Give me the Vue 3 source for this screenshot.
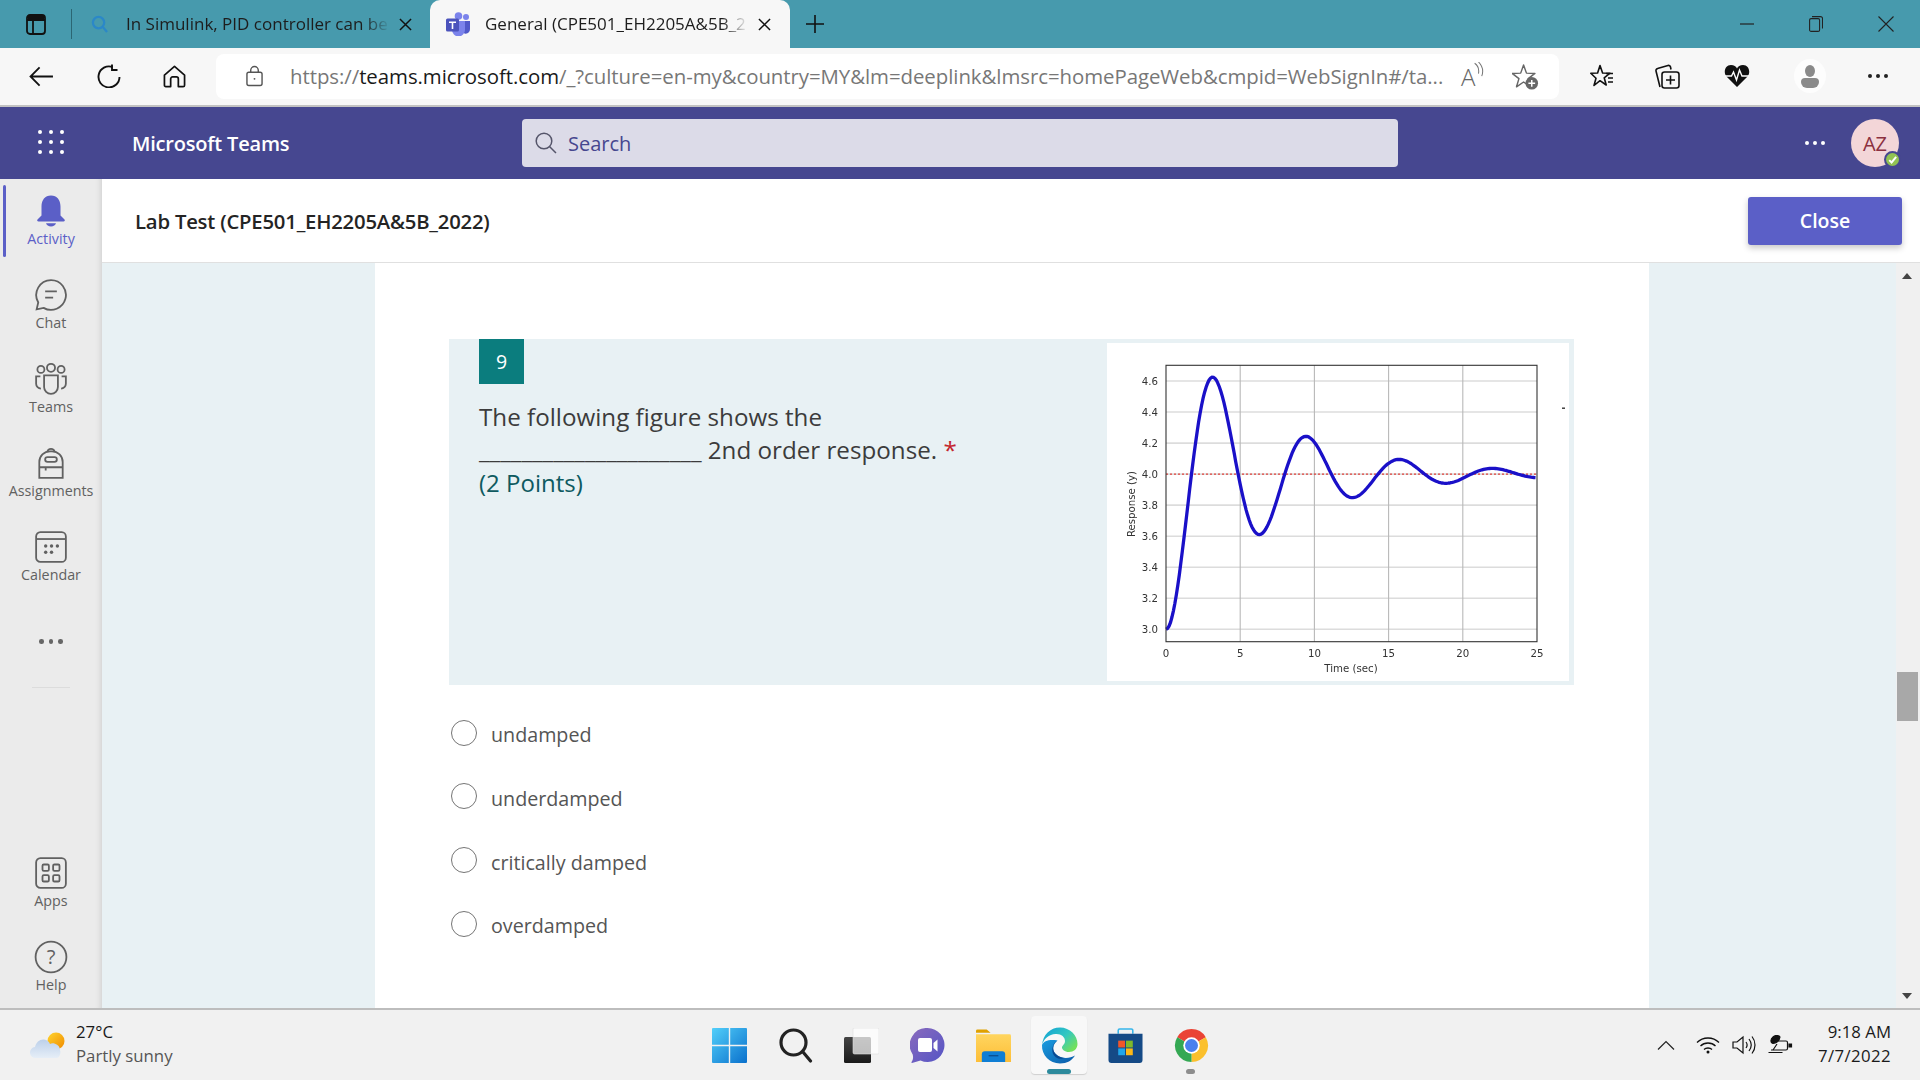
<script setup>
import { computed } from 'vue'

const X0 = 1166, XS = (1537 - 1166) / 25
const Y3 = 629.3, YS = (629.3 - 381) / 1.6
const px = (t) => X0 + t * XS
const py = (v) => Y3 - (v - 3) * YS

const curve = computed(() => {
  const pts = []
  for (let t = 0; t <= 25; t += 0.1) {
    const v = 4 - Math.exp(-0.15 * t) * (Math.cos(t) + 0.15 * Math.sin(t))
    pts.push(`${px(t).toFixed(1)},${py(v).toFixed(1)}`)
  }
  return pts.join(' ')
})
const yTicks = ['3.0', '3.2', '3.4', '3.6', '3.8', '4.0', '4.2', '4.4', '4.6']
const xTicks = [0, 5, 10, 15, 20, 25]
const options = ['undamped', 'underdamped', 'critically damped', 'overdamped']
</script>

<template>
  <div class="page">
    <!-- browser tab strip -->
    <div class="tabstrip">
      <svg class="tab-actions" viewBox="0 0 20 21" fill="none" stroke="#111" stroke-width="1.8">
        <rect x="1" y="1" width="18" height="19" rx="3" />
        <path d="M1 6h18M7 6v14" />
        <path d="M2 2h16v4H2z" fill="#111" stroke="none" />
      </svg>
      <span class="tab-sep"></span>
      <div class="tab">
        <svg class="tab-q" viewBox="0 0 18 20" fill="none" stroke="#2b88c8" stroke-width="2.4">
          <circle cx="8" cy="8" r="6" />
          <path d="M12.5 12.5 17 18" />
        </svg>
        <span class="tab-title faded">In Simulink, PID controller can be</span>
        <svg class="tab-x" viewBox="0 0 14 14" stroke="#111" stroke-width="1.6"><path d="M1 1l12 12M13 1 1 13" /></svg>
      </div>
      <div class="tab active">
        <svg class="tab-teams" viewBox="0 0 25 24">
          <circle cx="20" cy="5" r="3" fill="#7b83eb" />
          <path d="M14 9h10v8a4.500 4.500 0 0 1-9 .5Z" fill="#5059c9" />
          <circle cx="12.500" cy="4" r="3.800" fill="#7b83eb" />
          <path d="M6 9h13v9a6.500 6.500 0 0 1-13 0Z" fill="#7b83eb" />
          <rect x="0" y="6.500" width="13" height="13" rx="1.500" fill="#4b53bc" />
          <path d="M3 9.500h7v1.500H7.300v6H5.700v-6H3z" fill="#fff" />
        </svg>
        <span class="tab-title faded">General (CPE501_EH2205A&amp;5B_2</span>
        <svg class="tab-x" viewBox="0 0 14 14" stroke="#111" stroke-width="1.6"><path d="M1 1l12 12M13 1 1 13" /></svg>
      </div>
      <svg class="tab-plus" viewBox="0 0 20 20" stroke="#111" stroke-width="1.6"><path d="M10 1v18M1 10h18" /></svg>
      <div class="winctl">
        <svg class="win-min" viewBox="0 0 14 2" stroke="#222" stroke-width="1.2"><path d="M0 1h14" /></svg>
        <svg class="win-res" viewBox="0 0 14 16" fill="none" stroke="#222" stroke-width="1.1">
          <rect x=".6" y="2.600" width="10" height="12.800" rx="1.500" />
          <path d="M3 .6h8.500a2 2 0 0 1 2 2v10" />
        </svg>
        <svg class="win-x" viewBox="0 0 16 16" stroke="#222" stroke-width="1.100"><path d="M.5.5l15 15M15.500.5l-15 15" /></svg>
      </div>
    </div>

    <!-- address bar -->
    <div class="addrbar">
      <svg class="nav-back" viewBox="0 0 26 22" fill="none" stroke="#111" stroke-width="1.900"><path d="M25 11H2M11 1.500 1.500 11l9.500 9.500" /></svg>
      <svg class="nav-reload" viewBox="0 0 24 24" fill="none" stroke="#111" stroke-width="1.900"><path d="M15.500 3A10.500 10.500 0 1 0 22.500 13" /><path d="M15 .5v5.500h5.500" /></svg>
      <svg class="nav-home" viewBox="0 0 24 24" fill="none" stroke="#111" stroke-width="1.800" stroke-linejoin="round"><path d="M1.500 10.500 12 1.500l10.500 9v10.500a1.500 1.500 0 0 1-1.500 1.500h-5v-8a2 2 0 0 0-2-2h-4a2 2 0 0 0-2 2v8H3a1.500 1.500 0 0 1-1.500-1.500z" /></svg>
      <div class="omnibox">
        <svg class="lock" viewBox="0 0 18 22" fill="none" stroke="#555" stroke-width="1.500"><rect x="1" y="7" width="16" height="14" rx="2" /><path d="M5 7V5a4 4 0 0 1 8 0v2" /><circle cx="9" cy="14" r="1" fill="#555" stroke="none" /></svg>
        <span class="url"><span class="url-dim">https://</span><span class="url-host">teams.microsoft.com</span><span class="url-dim">/_?culture=en-my&amp;country=MY&amp;lm=deeplink&amp;lmsrc=homePageWeb&amp;cmpid=WebSignIn#/ta...</span></span>
        <span class="read-aloud">
          <span class="read-a">A</span>
          <svg class="read-waves" viewBox="0 0 8 14" fill="none" stroke="#777" stroke-width=".8"><path d="M1 1c3 2 3.500 5 3 8M4 0c3 3 4 7 2.500 11" /></svg>
        </span>
        <svg class="fav-add" viewBox="0 0 28 28" fill="none">
          <path d="M12 2l3 8.500 8.800.3-7 5.400 2.500 8.500-7.300-5-7.300 5 2.500-8.500-7-5.400 8.800-.3z" stroke="#666" stroke-width="1.500" stroke-linejoin="round" />
          <circle cx="20.500" cy="21" r="6.500" fill="#666" />
          <path d="M20.500 17.500v7M17 21h7" stroke="#fff" stroke-width="1.500" />
        </svg>
      </div>
      <svg class="br-fav" viewBox="0 0 24 24" fill="none" stroke="#111" stroke-width="1.600" stroke-linejoin="round">
        <path d="M10 1.500l2.600 7.500 7.400.2-5.800 4.600 2 7.200-6.200-4.300L4 21.500l2-7.200L.8 9.200 7.600 9z" />
        <path d="M16 9.500h7M18 14h5M18 18h5" />
      </svg>
      <svg class="br-coll" viewBox="0 0 26 26" fill="none" stroke="#111" stroke-width="1.600">
        <path d="M6 24 2 8a2 2 0 0 1 1.500-2.400L14 2.500a2 2 0 0 1 2.500 1.500l.5 2.500" />
        <rect x="8" y="9" width="17" height="16" rx="2.500" />
        <path d="M16.500 12.500v9M12 17h9" />
      </svg>
      <svg class="br-heart" viewBox="0 0 26 24">
        <path d="M13 23 2.500 12.500C-1 8.500 1 1 7 1c3 0 5 1.500 6 3.500C14 2.500 16 1 19 1c6 0 8 7.500 4.500 11.500Z" fill="#111" />
        <path d="M1 12h6.500l2-4 3 8 3-10 2.500 6h7" fill="none" stroke="#fff" stroke-width="1.400" />
      </svg>
      <div class="br-profile">
        <span class="pf-head"></span>
        <span class="pf-body"></span>
      </div>
      <div class="br-dots"><i></i><i></i><i></i></div>
    </div>

    <!-- teams header -->
    <div class="teams-bar">
      <div class="waffle"><i v-for="n in 9" :key="n"></i></div>
      <span class="brand">Microsoft Teams</span>
      <div class="search">
        <svg class="search-ic" viewBox="0 0 22 22" fill="none" stroke="#55556a" stroke-width="1.500"><circle cx="9" cy="9" r="7.800" /><path d="M14.500 14.500 21 21" /></svg>
        <span class="search-text">Search</span>
      </div>
      <div class="bar-dots"><i></i><i></i><i></i></div>
      <div class="avatar">
        AZ
        <span class="status">
          <svg viewBox="0 0 10 10" fill="none" stroke="#fff" stroke-width="1.500"><path d="M2.500 5.500 4.300 7.300 7.800 3" /></svg>
        </span>
      </div>
    </div>

    <div class="main">
      <!-- teams rail -->
      <aside class="rail">
        <div class="rail-item current">
          <svg class="bell" viewBox="0 0 32 32" fill="#5b5fc7">
            <path d="M16 .5C10 .5 6.500 5 6.500 11.500v9L2.500 24.500c-.8 1 0 2 1 2h25c1 0 1.800-1 1-2l-4-4v-9C25.500 5 22 .5 16 .5Z" />
            <path d="M11 28.300h10c-.5 2-2.500 3.200-5 3.200s-4.500-1.200-5-3.200Z" />
          </svg>
          <span>Activity</span>
        </div>
        <div class="rail-item">
          <svg viewBox="0 0 32 32" class="line">
            <path d="M16 2a14 14 0 1 1-7 26.100L2.500 29.500 4 23A14 14 0 0 1 16 2Z" />
            <path d="M10.500 12.500h11M10.500 18.500h7.500" />
          </svg>
          <span>Chat</span>
        </div>
        <div class="rail-item">
          <svg viewBox="0 0 32 32" class="line">
            <circle cx="6.500" cy="7" r="3.300" /><circle cx="16" cy="5.500" r="3.800" /><circle cx="25.500" cy="7" r="3.300" />
            <path d="M9.500 12.500h13v11a6.500 6.500 0 0 1-13 0Z" />
            <path d="M6 13.500H2v7a4.500 4.500 0 0 0 4.500 4.500M26 13.500h4v7a4.500 4.500 0 0 1-4.500 4.500" />
          </svg>
          <span>Teams</span>
        </div>
        <div class="rail-item">
          <svg viewBox="0 0 32 32" class="line">
            <path d="M12.500 5.500a3.600 3.600 0 0 1 7 0" />
            <path d="M5 30V15A10 10 0 0 1 15 5h2a10 10 0 0 1 10 10v15z" />
            <rect x="10.500" y="10.500" width="11" height="4.500" rx="2.200" />
            <path d="M5 20h22M11 20v3" />
          </svg>
          <span>Assignments</span>
        </div>
        <div class="rail-item">
          <svg viewBox="0 0 32 32" class="line">
            <rect x="2" y="2" width="28" height="28" rx="4" />
            <path d="M2 8.500h28" />
            <g fill="#616161" stroke="none">
              <circle cx="11" cy="15" r="1.600" /><circle cx="16.500" cy="15" r="1.600" /><circle cx="22" cy="15" r="1.600" />
              <circle cx="11" cy="21" r="1.600" /><circle cx="16.500" cy="21" r="1.600" />
            </g>
          </svg>
          <span>Calendar</span>
        </div>
        <div class="rail-more"><i></i><i></i><i></i></div>
        <div class="rail-sep"></div>
        <div class="rail-bottom">
          <div class="rail-item">
            <svg viewBox="0 0 32 32" class="line">
              <rect x="2" y="2" width="28" height="28" rx="4" />
              <rect x="8" y="8" width="6" height="6" rx="1.200" /><rect x="18" y="8" width="6" height="6" rx="1.200" />
              <rect x="8" y="18" width="6" height="6" rx="1.200" /><rect x="18" y="18" width="6" height="6" rx="1.200" />
            </svg>
            <span>Apps</span>
          </div>
          <div class="rail-item">
            <svg viewBox="0 0 32 32" class="line">
              <circle cx="16" cy="16" r="14.500" />
              <text x="16" y="22.500" class="help-q" text-anchor="middle">?</text>
            </svg>
            <span>Help</span>
          </div>
        </div>
      </aside>

      <div class="workspace">
        <div class="subheader">
          <span class="sub-title">Lab Test (CPE501_EH2205A&amp;5B_2022)</span>
          <button class="close-btn">Close</button>
        </div>
        <div class="content">
          <div class="scroller">
            <div class="sheet">
              <section class="question">
                <div class="q-left">
                  <div class="q-num">9</div>
                  <p class="q-text">The following figure shows the _____________________ 2nd order response. <span class="req">*</span></p>
                  <p class="q-points">(2 Points)</p>
                </div>
                <div class="q-figure">
                  <svg viewBox="1107 343 462 338" class="chart">
                    <line v-for="t in yTicks" :key="'g' + t" x1="1166" x2="1537" :y1="py(+t)" :y2="py(+t)" stroke="#dcdcdc" stroke-width="1.600" />
                    <line v-for="t in [5, 10, 15, 20]" :key="'v' + t" :x1="px(t)" :x2="px(t)" y1="365.300" y2="641.700" stroke="#b8b8b8" stroke-width="1.100" />
                    <line x1="1166" x2="1537" :y1="py(4)" :y2="py(4)" stroke="#e0403a" stroke-width="1.400" stroke-dasharray="2 2" />
                    <polyline :points="curve" fill="none" stroke="#1a10c8" stroke-width="3.300" />
                    <rect x="1166" y="365.300" width="371" height="276.400" fill="none" stroke="#333" stroke-width="1.100" />
                    <g class="ticks">
                      <text v-for="t in yTicks" :key="'y' + t" x="1158" :y="py(+t) + 3.800" text-anchor="end">{{ t }}</text>
                      <text v-for="t in xTicks" :key="'x' + t" :x="px(t)" y="657" text-anchor="middle">{{ t }}</text>
                      <text x="1351" y="672" text-anchor="middle">Time (sec)</text>
                      <text transform="translate(1135 504) rotate(-90)" text-anchor="middle">Response (y)</text>
                    </g>
                    <rect x="1562" y="407.500" width="3" height="1.400" fill="#333" />
                  </svg>
                </div>
              </section>
              <ul class="options">
                <li v-for="o in options" :key="o">
                  <span class="radio"></span>
                  <span class="opt-text">{{ o }}</span>
                </li>
              </ul>
            </div>
          </div>
          <div class="scrollbar">
            <span class="arrow up"></span>
            <span class="thumb"></span>
            <span class="arrow down"></span>
          </div>
        </div>
      </div>
    </div>

    <!-- windows taskbar -->
    <footer class="taskbar">
      <div class="weather">
        <svg class="weather-ic" viewBox="0 0 35 27">
          <defs>
            <linearGradient id="sunG" x1="0" y1="0" x2="1" y2="1"><stop offset="0" stop-color="#ffd52e" /><stop offset="1" stop-color="#f08a00" /></linearGradient>
            <linearGradient id="cloudG" x1="0" y1="0" x2="0" y2="1"><stop offset="0" stop-color="#bcd0ea" /><stop offset="1" stop-color="#e6eef7" /></linearGradient>
          </defs>
          <circle cx="26" cy="9" r="8.500" fill="url(#sunG)" />
          <path d="M6 26a5.500 5.500 0 0 1-1-11c1-5 5-8 9-7.500 3 .3 5 2 6 4.500 1-.7 3-1 5-.3 3 1 5 3 5 6.500 1 2 0 7.800-4 7.800z" fill="url(#cloudG)" />
        </svg>
        <div class="weather-text">
          <span class="w-temp">27°C</span>
          <span class="w-desc">Partly sunny</span>
        </div>
      </div>
      <div class="apps">
        <div class="app">
          <svg viewBox="0 0 35 35">
            <defs>
              <linearGradient id="winG" x1="0" y1="0" x2="1" y2="1"><stop offset="0" stop-color="#52cffa" /><stop offset="1" stop-color="#0a70cc" /></linearGradient>
            </defs>
            <path d="M1 0h15.800v16.800H0V1a1 1 0 0 1 1-1ZM18.200 0H34a1 1 0 0 1 1 1v15.800H18.200ZM0 18.200h16.800V35H1a1 1 0 0 1-1-1ZM18.200 18.200H35V34a1 1 0 0 1-1 1H18.200Z" fill="url(#winG)" />
          </svg>
        </div>
        <div class="app">
          <svg viewBox="0 0 33 35" fill="none" stroke="#222" stroke-width="3.200" stroke-linecap="round"><circle cx="14.500" cy="14.500" r="12.500" /><path d="M24 24l7.500 9" /></svg>
        </div>
        <div class="app">
          <svg viewBox="0 0 35 35">
            <defs>
              <linearGradient id="tvG" x1="0" y1="0" x2="0" y2="1"><stop offset="0" stop-color="#444" /><stop offset="1" stop-color="#1a1a1a" /></linearGradient>
            </defs>
            <rect x="0" y="9" width="27" height="26" rx="1.500" fill="url(#tvG)" />
            <rect x="9" y="0" width="26" height="26" rx="1.500" fill="#fff" fill-opacity=".7" stroke="#ddd" stroke-width=".6" />
          </svg>
        </div>
        <div class="app">
          <svg viewBox="0 0 34 35">
            <defs>
              <linearGradient id="meetG" x1="0" y1="0" x2="1" y2="1"><stop offset="0" stop-color="#8a6bbd" /><stop offset="1" stop-color="#5454c5" /></linearGradient>
            </defs>
            <path d="M17 0a17 17 0 1 1-7 32.500L1.500 35c-.8 0-.7-.8-.3-1.200 1.200-1.500 1.800-4 1-7.300A17 17 0 0 1 17 0Z" fill="url(#meetG)" />
            <rect x="7.500" y="10" width="14" height="14" rx="2" fill="#fff" />
            <path d="M23 15l4-3.500v12L23 20z" fill="#fff" />
          </svg>
        </div>
        <div class="app">
          <svg viewBox="0 0 36 34">
            <defs>
              <linearGradient id="fldG" x1="0" y1="0" x2="0" y2="1"><stop offset="0" stop-color="#ffd55f" /><stop offset="1" stop-color="#fdbe37" /></linearGradient>
            </defs>
            <path d="M0 2a1.500 1.500 0 0 1 1.500-1.500H11l4 3.500h-15z" fill="#e0a100" />
            <path d="M0 5.500h34.500a1.500 1.500 0 0 1 1.500 1.500V34H0z" fill="url(#fldG)" />
            <path d="M6 34V26a3 3 0 0 1 3-3h18a3 3 0 0 1 3 3v8z" fill="#0f7ed4" />
            <path d="M13 27.500h10" stroke="#0b4f91" stroke-width="1.400" />
          </svg>
        </div>
        <div class="app app-active">
          <svg viewBox="0 0 37 37">
            <defs>
              <linearGradient id="edgeA" x1="0" y1="0" x2="1" y2=".7"><stop offset="0" stop-color="#0f9fd8" /><stop offset=".6" stop-color="#34c8c0" /><stop offset="1" stop-color="#72e05c" /></linearGradient>
              <linearGradient id="edgeB" x1="0" y1="0" x2="1" y2="1"><stop offset="0" stop-color="#1a9de0" /><stop offset="1" stop-color="#0b5aa8" /></linearGradient>
            </defs>
            <path d="M1 18C2 8 9 .5 19 .5c10 0 17.500 8 17.500 16.500 0 5-4 8-8.500 8-4.500 0-7-2.500-7-4.500 0-2 3-3 3-6.500 0-4-4-7.500-9.500-7C8 7.500 3 11.500 1 18Z" fill="url(#edgeA)" />
            <path d="M1 18c-.5 10 7.500 18.500 18 18.500 7 0 12-3 15-8-5 3-12.500 3.500-17.500 0-6-4-5.500-11 0-15-8-1.500-14 .5-15.500 4.500Z" fill="url(#edgeB)" />
            <path d="M16.500 13.500c-5.500 4-6 11 0 15 2 1.400 4.500 2.200 7 2.500-2 1-6 1.500-9-1-5-4-4-13 2-16.500Z" fill="#0a4a92" />
          </svg>
          <span class="run-bar"></span>
        </div>
        <div class="app">
          <svg viewBox="0 0 35 36">
            <path d="M10 6V2.500A1.500 1.500 0 0 1 11.500 1h12A1.500 1.500 0 0 1 25 2.500V6" fill="none" stroke="#36b5ea" stroke-width="1.600" />
            <path d="M0 6h35v27a3 3 0 0 1-3 3H3a3 3 0 0 1-3-3Z" fill="#154a86" />
            <rect x="10" y="13" width="7" height="7" fill="#f0562a" /><rect x="18" y="13" width="7" height="7" fill="#7fb92a" />
            <rect x="10" y="21" width="7" height="7" fill="#20a6ea" /><rect x="18" y="21" width="7" height="7" fill="#fcb817" />
          </svg>
        </div>
        <div class="app">
          <svg viewBox="0 0 34 34">
            <path d="M17 17 3.140 9A16 16 0 0 1 30.860 9Z" fill="#ea4335" />
            <path d="M17 17 30.860 9A16 16 0 0 1 17 33Z" fill="#fbc02d" />
            <path d="M17 17 17 33A16 16 0 0 1 3.140 9Z" fill="#34a853" />
            <circle cx="17" cy="17" r="8" fill="#fff" />
            <circle cx="17" cy="17" r="6.300" fill="#4a80ee" />
          </svg>
          <span class="run-dot"></span>
        </div>
      </div>
      <div class="tray">
        <svg class="t-chev" viewBox="0 0 18 10" fill="none" stroke="#222" stroke-width="1.200"><path d="M1 9.500 9 1.500l8 8" /></svg>
        <svg class="t-wifi" viewBox="0 0 24 18" fill="none" stroke="#111" stroke-width="1.300">
          <path d="M1 6.500c6-6 16-6 22 0M4.500 10c4-4 11-4 15 0M8 13.500c2-2 6-2 8 0" />
          <circle cx="12" cy="16" r="1.500" fill="#111" stroke="none" />
        </svg>
        <svg class="t-vol" viewBox="0 0 24 20" fill="none" stroke="#111" stroke-width="1.200">
          <path d="M1 7v6h4l6 5V2L5 7z" />
          <path d="M14 7c1.500 2 1.500 4 0 6M17 4c3 4 3 8 0 12M20 1.500c4 5 4 12 0 17" />
        </svg>
        <svg class="t-bat" viewBox="0 0 25 20" fill="none" stroke="#111" stroke-width="1.200">
          <path d="M5 2c3-2.500 6-1.500 7 0-.5 3-3 6-7 6.500C2 8 2.500 4 5 2Z" fill="#111" />
          <path d="M8 6h10a1.500 1.500 0 0 1 1.500 1.500v6A1.500 1.500 0 0 1 18 15H3" />
          <path d="M.5 17.500h14M5 15l4-6" />
          <path d="M21 9h2.500v3H21z" fill="#111" />
        </svg>
        <div class="clock">
          <span>9:18 AM</span>
          <span class="date">7/7/2022</span>
        </div>
      </div>
    </footer>
  </div>
</template>

<style>
html, body { margin: 0; padding: 0; background: #fff; }
</style>

<style scoped>
.page {
  width: 1920px;
  height: 1080px;
  display: flex;
  flex-direction: column;
  overflow: hidden;
  font-family: "Open Sans", "Liberation Sans", sans-serif;
  color: #242424;
}
svg { display: block; flex: none; }

/* tab strip */
.tabstrip {
  height: 48px;
  flex: none;
  background: #479aad;
  display: flex;
  align-items: center;
  padding-left: 26px;
}
.tab-actions { width: 20px; height: 21px; }
.tab-sep { width: 1px; height: 30px; background: #2b6673; margin-left: 25px; }
.tab {
  height: 48px;
  display: flex;
  align-items: center;
  box-sizing: border-box;
}
.tab:not(.active) { width: 358px; }
.tab-q { width: 17px; height: 19px; margin-left: 19px; }
.tab-title {
  font-size: 17px;
  white-space: nowrap;
  overflow: hidden;
  color: #1d1d1d;
  margin-bottom: 2px;
}
.faded {
  -webkit-mask-image: linear-gradient(to right, #000 90%, transparent 100%);
  mask-image: linear-gradient(to right, #000 90%, transparent 100%);
}
.tab:not(.active) .tab-title { width: 264px; margin-left: 18px; flex: none; }
.tab:not(.active) .tab-x { margin-left: 9px; }
.tab-x { width: 13px; height: 13px; }
.tab.active {
  width: 360px;
  background: #f7f7f7;
  border-radius: 10px 10px 0 0;
  padding-left: 16px;
}
.tab-teams { width: 25px; height: 24px; }
.tab.active .tab-title { width: 263px; margin-left: 14px; flex: none; }
.tab.active .tab-x { margin-left: 10px; }
.tab-plus { width: 20px; height: 20px; margin-left: 15px; }
.winctl { margin-left: auto; display: flex; align-items: center; padding-right: 26px; }
.win-min { width: 14px; height: 2px; }
.win-res { width: 14px; height: 16px; margin-left: 55px; }
.win-x { width: 16px; height: 16px; margin-left: 55px; }

/* address bar */
.addrbar {
  height: 56px;
  flex: none;
  background: #f7f7f7;
  border-bottom: 2px solid #c2c2c2;
  display: flex;
  align-items: center;
  padding-left: 29px;
  padding-bottom: 1px;
  box-sizing: content-box;
}
.nav-back { width: 25px; height: 21px; }
.nav-reload { width: 24px; height: 24px; margin-left: 43px; }
.nav-home { width: 23px; height: 23px; margin-left: 42px; }
.omnibox {
  width: 1343px;
  height: 45px;
  margin-left: 30px;
  background: #fff;
  border-radius: 8px;
  display: flex;
  align-items: center;
  position: relative;
}
.lock { width: 17px; height: 22px; margin-left: 30px; }
.url { margin-left: 27px; font-size: 20.400px; white-space: nowrap; letter-spacing: -.05px; margin-bottom: 1px; }
.url-dim { color: #777; }
.url-host { color: #1a1a1a; }
.read-aloud { position: absolute; left: 1245px; top: 8px; display: flex; align-items: flex-start; }
.read-a { font-size: 24px; line-height: 30px; color: #666; font-weight: 300; }
.read-waves { width: 11px; height: 18px; margin-left: -2px; }
.fav-add { position: absolute; left: 1296px; top: 9px; width: 27px; height: 27px; }
.br-fav { width: 24px; height: 24px; margin-left: 31px; }
.br-coll { width: 26px; height: 26px; margin-left: 40px; }
.br-heart { width: 26px; height: 24px; margin-left: 44px; }
.br-profile {
  width: 32px;
  height: 34px;
  margin-left: 44px;
  border-radius: 50%;
  background: #fdfdfd;
  display: flex;
  flex-direction: column;
  align-items: center;
  justify-content: center;
}
.pf-head { width: 10px; height: 12px; border-radius: 50%; background: #8a8a8a; }
.pf-body { width: 18px; height: 10px; border-radius: 6px 6px 9px 9px; background: #8a8a8a; margin-top: 1px; }
.br-dots { display: flex; gap: 4px; margin-left: 42px; }
.br-dots i { width: 4px; height: 4px; border-radius: 50%; background: #222; }

/* teams header */
.teams-bar {
  height: 72px;
  flex: none;
  background: #464790;
  display: flex;
  align-items: center;
  padding-left: 38px;
}
.waffle {
  width: 26px;
  height: 24px;
  margin-top: -3px;
  display: grid;
  grid-template-columns: repeat(3, 4px);
  grid-template-rows: repeat(3, 4px);
  justify-content: space-between;
  align-content: space-between;
}
.waffle i { border-radius: 50%; background: #fff; }
.brand { margin-left: 68px; width: 390px; font-size: 20px; font-weight: 600; color: #fff; letter-spacing: -.2px; }
.search {
  width: 876px;
  height: 48px;
  background: #dcdbe8;
  border-radius: 4px;
  display: flex;
  align-items: center;
  box-sizing: border-box;
  padding-left: 13px;
}
.search-ic { width: 22px; height: 22px; }
.search-text { margin-left: 11px; font-size: 20px; color: #46478f; }
.bar-dots { margin-left: 407px; display: flex; gap: 4px; }
.bar-dots i { width: 4px; height: 4px; border-radius: 50%; background: #fff; }
.avatar {
  position: relative;
  width: 48px;
  height: 48px;
  margin-left: 26px;
  border-radius: 50%;
  background: #f3d6d8;
  color: #8b3040;
  font-size: 20px;
  display: flex;
  align-items: center;
  justify-content: center;
}
.status {
  position: absolute;
  right: -2px;
  bottom: -1px;
  width: 13px;
  height: 13px;
  border-radius: 50%;
  background: #92c353;
  border: 2px solid #464790;
}
.status svg { width: 13px; height: 13px; }

/* body */
.main { flex: 1; min-height: 0; display: flex; }
.rail {
  width: 102px;
  flex: none;
  background: #ebebeb;
  box-shadow: inset -7px 0 7px -7px rgba(0, 0, 0, .16);
  padding-top: 6px;
  box-sizing: border-box;
  display: flex;
  flex-direction: column;
}
.rail-item {
  height: 84px;
  box-sizing: border-box;
  padding-top: 11px;
  display: flex;
  flex-direction: column;
  align-items: center;
  position: relative;
  color: #616161;
  font-size: 14.300px;
}
.rail-item svg { width: 30px; height: 30px; }
.rail-item svg.bell { width: 32px; height: 32px; margin: -1px 0; }
.rail-item svg.line { width: 34px; height: 34px; margin: -2px 0; }
.rail-item span { margin-top: 3px; line-height: 20px; }
.rail-item.current { color: #5b5fc7; }
.rail-item.current::before {
  content: "";
  position: absolute;
  left: 3px;
  top: 0;
  width: 3px;
  height: 72px;
  background: #5b5fc7;
  border-radius: 2px;
}
.line { fill: none; stroke: #616161; stroke-width: 1.700; }
.help-q { fill: #616161; stroke: none; font-size: 19px; font-family: "Open Sans", sans-serif; }
.rail-more { display: flex; justify-content: center; gap: 5px; height: 72px; padding-top: 34px; box-sizing: border-box; }
.rail-more i { width: 4.500px; height: 4.500px; border-radius: 50%; background: #666; }
.rail-sep { width: 38px; height: 1px; background: #dcdcdc; margin: 10px auto 0; }
.rail-bottom { margin-top: auto; }
.rail-bottom .rail-item:last-child { height: 77px; }

.workspace { flex: 1; min-width: 0; display: flex; flex-direction: column; }
.subheader {
  height: 84px;
  flex: none;
  box-sizing: border-box;
  background: #fff;
  border-bottom: 1px solid #e0e0e0;
  display: flex;
  align-items: center;
  justify-content: space-between;
  padding: 0 18px 0 33px;
}
.sub-title { font-size: 20.300px; font-weight: 600; color: #242424; letter-spacing: -.2px; }
.close-btn {
  width: 154px;
  height: 48px;
  border: 0;
  border-radius: 3px;
  background: #5b5fc7;
  color: #fff;
  font: 600 19.500px "Open Sans", sans-serif;
  box-shadow: 0 3px 6px rgba(0, 0, 0, .22);
}
.content { flex: 1; min-height: 0; display: flex; background: #e8f1f4; }
.scroller { flex: 1; min-width: 0; padding: 0 247px 0 273px; overflow: hidden; }
.sheet { height: 100%; background: #fff; padding: 76px 75px 0 74px; box-sizing: border-box; }
.question {
  height: 346px;
  background: #e8f1f4;
  display: flex;
  justify-content: space-between;
  padding: 4px 5px 4px 30px;
  box-sizing: border-box;
  position: relative;
}
.q-left { margin-top: -4px; }
.q-num {
  width: 45px;
  height: 45px;
  background: #0b7d7e;
  color: #fff;
  font-size: 19.500px;
  display: flex;
  align-items: center;
  justify-content: center;
}
.q-text { margin: 16px 0 0; width: 490px; font-size: 24.200px; line-height: 33px; color: #3c3c3c; font-weight: 400; }
.req { color: #c4262e; }
.q-points { margin: 0; font-size: 24px; line-height: 33px; color: #0e5a60; }
.q-figure { width: 462px; height: 338px; background: #fff; }
.chart { width: 462px; height: 338px; filter: blur(.4px); }
.ticks text { font-family: "DejaVu Sans", sans-serif; font-size: 10.200px; fill: #333; }
.options { list-style: none; margin: 16px 0 0; padding: 0; }
.options li { height: 63.670px; display: flex; align-items: center; }
.radio {
  width: 24px;
  height: 24px;
  border: 1.500px solid #757575;
  border-radius: 50%;
  margin-left: 2px;
  background: #fff;
  flex: none;
}
.opt-text { margin-left: 14px; font-size: 19.700px; color: #555; position: relative; top: 2px; }

.scrollbar {
  width: 24px;
  flex: none;
  background: #f0f0f0;
  position: relative;
}
.thumb { position: absolute; left: 1px; top: 409px; width: 21px; height: 49px; background: #a8a8a8; }
.arrow { position: absolute; left: 6px; width: 0; height: 0; border-left: 5.500px solid transparent; border-right: 5.500px solid transparent; }
.arrow.up { top: 10px; border-bottom: 6px solid #444; }
.arrow.down { bottom: 9px; border-top: 6px solid #444; }

/* taskbar */
.taskbar {
  height: 72px;
  flex: none;
  background: #f1f1f1;
  border-top: 2px solid #bdbdbd;
  box-sizing: border-box;
  display: flex;
  align-items: center;
  color: #1a1a1a;
}
.weather { width: 696px; flex: none; display: flex; align-items: center; padding-left: 30px; box-sizing: border-box; }
.weather-ic { width: 35px; height: 27px; }
.weather-text { display: flex; flex-direction: column; margin: -2px 0 0 11px; line-height: 24px; font-size: 16.800px; }
.w-desc { color: #555; }
.apps { display: grid; grid-template-columns: repeat(8, 66px); flex: none; }
.app { height: 58px; position: relative; display: flex; align-items: center; justify-content: center; }
.app svg { width: 35px; height: 35px; }
.app-active::before {
  content: "";
  position: absolute;
  left: 5px;
  right: 5px;
  top: 0;
  bottom: 0;
  background: #f8f8f8;
  border-radius: 4px;
  box-shadow: 0 1px 1px rgba(0, 0, 0, .14);
}
.app-active svg { position: relative; width: 37px; height: 37px; }
.run-bar { position: absolute; left: 21px; bottom: 0; width: 24px; height: 5px; border-radius: 3px; background: #2d8a9c; }
.run-dot { position: absolute; left: 28px; bottom: 0; width: 9px; height: 5px; border-radius: 3px; background: #8d8d8d; }
.tray { margin-left: auto; display: flex; align-items: center; padding-right: 29px; }
.t-chev { width: 18px; height: 10px; }
.t-wifi { width: 24px; height: 18px; margin-left: 21px; }
.t-vol { width: 24px; height: 20px; margin-left: 12px; }
.t-bat { width: 25px; height: 20px; margin-left: 12px; }
.clock { display: flex; flex-direction: column; align-items: flex-end; margin: -2px 0 0 25px; font-size: 16.800px; line-height: 24px; }
.date { letter-spacing: .4px; }
</style>
